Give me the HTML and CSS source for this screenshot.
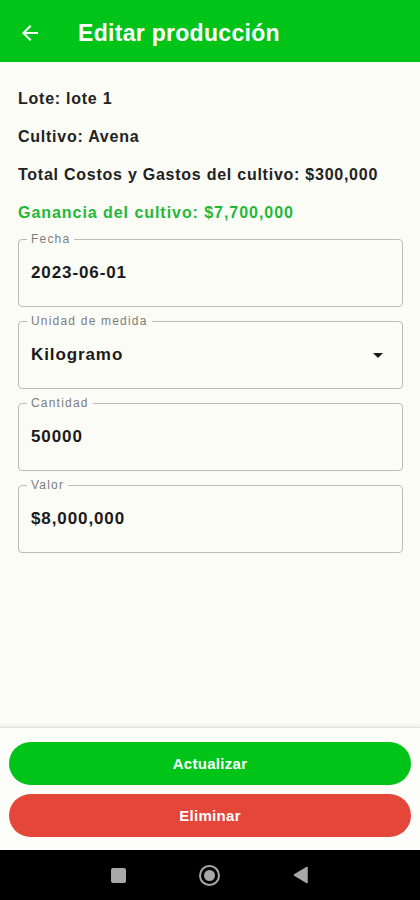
FILE: index.html
```html
<!DOCTYPE html>
<html lang="es">
<head>
    <meta charset="UTF-8">
    <meta name="viewport" content="width=device-width, initial-scale=1.0">
    <title>Editar producción</title>
    <link rel="stylesheet" href="styles.css">
</head>
<body>
    <div class="screen">
        <header class="appbar">
            <svg class="back" viewBox="0 0 24 24" width="24" height="24">
                <path d="M20 11H7.83l5.59-5.59L12 4l-8 8 8 8 1.41-1.41L7.83 13H20v-2z" fill="#fff"/>
            </svg>
            <h1>Editar producción</h1>
        </header>

        <main class="content">
            <div class="info">
                <p>Lote: lote 1</p>
                <p>Cultivo: Avena</p>
                <p>Total Costos y Gastos del cultivo: $300,000</p>
                <p class="profit">Ganancia del cultivo: $7,700,000</p>
            </div>

            <div class="field">
                <span class="label">Fecha</span>
                <span class="value">2023-06-01</span>
            </div>
            <div class="field">
                <span class="label">Unidad de medida</span>
                <span class="value">Kilogramo</span>
                <svg class="drop" viewBox="0 0 24 24" width="24" height="24">
                    <path d="M7 10l5 5 5-5z" fill="#1a1a1a"/>
                </svg>
            </div>
            <div class="field">
                <span class="label">Cantidad</span>
                <span class="value">50000</span>
            </div>
            <div class="field">
                <span class="label">Valor</span>
                <span class="value">$8,000,000</span>
            </div>
        </main>

        <footer class="actions">
            <button class="btn btn-update">Actualizar</button>
            <button class="btn btn-delete">Eliminar</button>
        </footer>

        <nav class="navbar">
            <span class="nav-square"></span>
            <span class="nav-home"></span>
            <svg class="nav-back" viewBox="0 0 16 18" width="16" height="18">
                <path d="M14 1.5 L1.5 9 L14 16.5 Z" fill="#a8a8a8" stroke="#a8a8a8" stroke-width="1.5" stroke-linejoin="round"/>
            </svg>
        </nav>
    </div>
</body>
</html>
```

FILE: styles.css
```css
* {
    box-sizing: border-box;
}
body {
    margin: 0;
    background: #fcfcf7;
    font-family: "Liberation Sans", Arial, sans-serif;
    color: #1c1c1c;
}
.screen {
    width: 420px;
    height: 900px;
    display: flex;
    flex-direction: column;
}

/* barra superior */
.appbar {
    height: 62px;
    background: #00c417;
    display: flex;
    align-items: center;
    padding: 4px 18px 0;
    gap: 36px;
}
.appbar h1 {
    margin: 0;
    color: #fff;
    font-size: 23px;
    font-weight: bold;
    letter-spacing: 0.3px;
}

.content {
    flex: 1;
    padding: 27px 17px 0 18px;
}
.info p {
    margin: 0 0 18px;
    font-size: 16px;
    line-height: 20px;
    font-weight: bold;
    letter-spacing: 0.75px;
    color: #222;
}
.info .profit {
    color: #1fb83a;
    letter-spacing: 0.95px;
    margin-bottom: 16px;
}

/* campos */
.field {
    position: relative;
    height: 68px;
    border: 1.5px solid #bcbcb8;
    border-radius: 4px;
    display: flex;
    align-items: center;
    padding: 0 12px;
    margin-bottom: 14px;
}
.field .label {
    position: absolute;
    top: -8px;
    left: 8px;
    padding: 0 4px;
    background: #fcfcf7;
    font-size: 12px;
    line-height: 14px;
    letter-spacing: 1.2px;
    color: #7c7c7c;
}
.field .value {
    flex: 1;
    font-size: 17px;
    font-weight: bold;
    letter-spacing: 0.9px;
    color: #1a1a1a;
}

/* botones */
.actions {
    background: #fdfdfa;
    border-top: 1px solid #e2e2df;
    box-shadow: 0 -2px 3px rgba(0, 0, 0, 0.06);
    padding: 14px 9px 13px;
    display: flex;
    flex-direction: column;
    gap: 9px;
}
.btn {
    height: 43px;
    border: none;
    border-radius: 22px;
    color: #fff;
    font-family: "Liberation Sans", Arial, sans-serif;
    font-size: 15px;
    font-weight: bold;
    letter-spacing: 0.3px;
}
.btn-update {
    background: #00c417;
}
.btn-delete {
    background: #e4463a;
}

/* barra de navegacion */
.navbar {
    height: 50px;
    background: #000;
    display: flex;
    align-items: center;
    justify-content: center;
    gap: 73px;
}
.nav-square {
    width: 15px;
    height: 15px;
    border-radius: 2px;
    background: #a8a8a8;
}
.nav-home {
    width: 21px;
    height: 21px;
    border-radius: 50%;
    border: 2px solid #a8a8a8;
    display: flex;
    align-items: center;
    justify-content: center;
}
.nav-home::after {
    content: "";
    width: 11px;
    height: 11px;
    border-radius: 50%;
    background: #a8a8a8;
}
```
